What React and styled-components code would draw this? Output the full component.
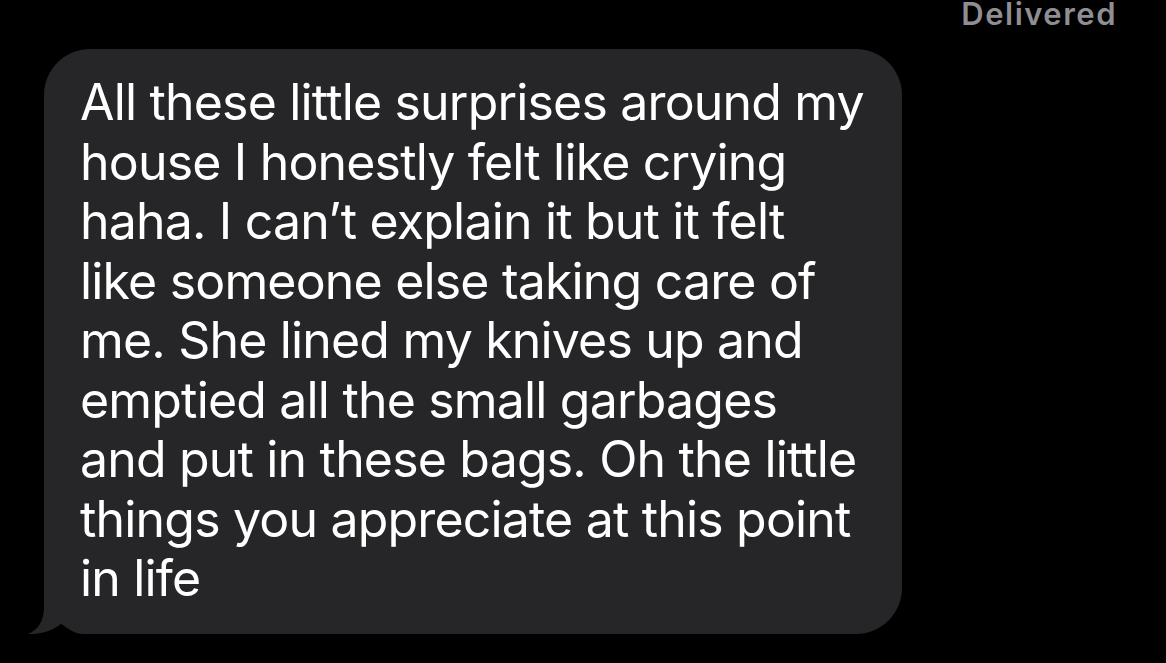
import React from "react";
import styled, { createGlobalStyle } from "styled-components";

const Global = createGlobalStyle`
  html, body { margin: 0; padding: 0; background: #000; }
  body { font-family: Inter, "Noto Sans", "Liberation Sans", sans-serif; }
`;

const Screen = styled.div`
  width: 1166px;
  height: 663px;
  background: #000;
  display: flex;
  flex-direction: column;
  overflow: hidden;
`;

const StatusRow = styled.div`
  display: flex;
  justify-content: flex-end;
  align-items: flex-start;
  padding-right: 49px;
  height: 49px;
  box-sizing: border-box;
`;

const Delivered = styled.span`
  color: #8e8e93;
  font-size: 31px;
  font-weight: 600;
  line-height: 28px;
  letter-spacing: 1.5px;
`;

const Thread = styled.div`
  display: flex;
  padding-left: 44px;
`;

const Bubble = styled.div`
  position: relative;
  width: 858px;
  box-sizing: border-box;
  background: #262628;
  border-radius: 46px;
  padding: 24px 20px 25px 36px;
  color: #fff;
  font-size: 50px;
  line-height: 59.5px;
  letter-spacing: -0.82px;
  white-space: pre-line;
`;

const MessageText = styled.div`
  position: relative;
  z-index: 1;
`;

const Tail = styled.svg`
  position: absolute;
  z-index: 0;
  left: -18px;
  bottom: 0;
  width: 74px;
  height: 45px;
  display: block;
`;

const text = `All these little surprises around my
house I honestly felt like crying
haha. I can’t explain it but it felt
like someone else taking care of
me. She lined my knives up and
emptied all the small garbages
and put in these bags. Oh the little
things you appreciate at this point
in life`;

export default function App() {
  return (
    <>
      <Global />
      <Screen>
        <StatusRow>
          <Delivered>Delivered</Delivered>
        </StatusRow>
        <Thread>
          <Bubble>
            <Tail viewBox="0 0 74 45">
              <path
                d="M18,0 L18,18 C18,32 12,41 2,45 C14,45.5 27,42 36,34 C42,40 48,45 58,45 L74,45 L74,0 Z"
                fill="#262628"
              />
            </Tail>
            <MessageText>{text}</MessageText>
          </Bubble>
        </Thread>
      </Screen>
    </>
  );
}
